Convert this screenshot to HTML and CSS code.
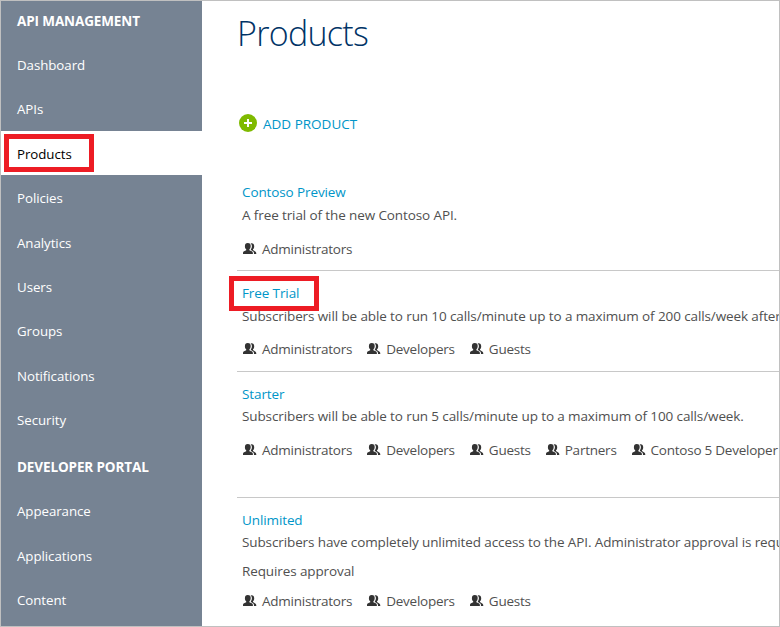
FILE: index.html
```
<!DOCTYPE html>
<html lang="en">
<head>
<meta charset="utf-8">
<title>Products</title>
<link rel="stylesheet" href="styles.css">
</head>
<body>
<svg class="defs" width="0" height="0" aria-hidden="true">
  <symbol id="people" viewBox="0 0 14 12">
    <path d="M4.7 0C6.8 0 7.8 1.2 7.7 3.2C7.6 4.8 7.1 5.7 6.4 6.3V7.2L9.2 8.6C9.8 9 9.9 9.8 9.9 11H0C0 9.8 0 9 .6 8.6L3.2 7.2V6.3C2.4 5.7 1.9 4.7 1.9 3.2C1.9 1.2 2.9 0 4.7 0Z"/>
    <path d="M7.5.3C9.9-.3 11.3 1 11.2 3.4C11.2 4.8 10.6 5.8 10 6.3V7.1L12.6 8.7C13.2 9.2 13.3 9.8 13.3 11H11C11 9.4 10.8 8.7 10 8.2L7.9 7V6.2C8.6 5.5 8.9 4.5 8.9 3.1C8.9 1.9 8.3 1 7.5.3Z"/>
  </symbol>
</svg>
<div class="app">
  <nav class="sidebar">
    <h2>API MANAGEMENT</h2>
    <a>Dashboard</a>
    <a>APIs</a>
    <a class="active">Products</a>
    <a>Policies</a>
    <a>Analytics</a>
    <a>Users</a>
    <a>Groups</a>
    <a>Notifications</a>
    <a>Security</a>
    <h2 class="portal">DEVELOPER PORTAL</h2>
    <a>Appearance</a>
    <a>Applications</a>
    <a>Content</a>
  </nav>
  <main class="content">
    <h1>Products</h1>
    <a class="add"><svg width="18" height="18" viewBox="0 0 18 18"><circle cx="9" cy="9" r="9" fill="#7fba00"/><path d="M5 9H13M9 5V13" stroke="#fff" stroke-width="2"/></svg><span>ADD PRODUCT</span></a>
    <section class="product">
      <a class="name">Contoso Preview</a>
      <p>A free trial of the new Contoso API.</p>
      <div class="groups"><span><svg><use href="#people"/></svg>Administrators</span></div>
    </section>
    <section class="product">
      <a class="name">Free Trial</a>
      <p>Subscribers will be able to run 10 calls/minute up to a maximum of 200 calls/week after</p>
      <div class="groups"><span><svg><use href="#people"/></svg>Administrators</span><span><svg><use href="#people"/></svg>Developers</span><span><svg><use href="#people"/></svg>Guests</span></div>
    </section>
    <section class="product starter">
      <a class="name">Starter</a>
      <p>Subscribers will be able to run 5 calls/minute up to a maximum of 100 calls/week.</p>
      <div class="groups"><span><svg><use href="#people"/></svg>Administrators</span><span><svg><use href="#people"/></svg>Developers</span><span><svg><use href="#people"/></svg>Guests</span><span><svg><use href="#people"/></svg>Partners</span><span><svg><use href="#people"/></svg>Contoso 5 Developer</span></div>
    </section>
    <section class="product unlimited">
      <a class="name">Unlimited</a>
      <p>Subscribers have completely unlimited access to the API. Administrator approval is requ</p>
      <p class="approval">Requires approval</p>
      <div class="groups"><span><svg><use href="#people"/></svg>Administrators</span><span><svg><use href="#people"/></svg>Developers</span><span><svg><use href="#people"/></svg>Guests</span></div>
    </section>
  </main>
  <div class="mark mark-nav"></div>
  <div class="mark mark-product"></div>
</div>
</body>
</html>
```
FILE: styles.css
```
* { box-sizing: border-box; }
body { margin: 0; font-family: "Open Sans", "Noto Sans", sans-serif; font-size: 13.5px; color: #505050; }
.defs { display: block; }
.app { position: relative; display: flex; width: 780px; height: 627px; border: 1px solid #c0c0c0; background: #fff; overflow: hidden; }
.sidebar { flex: 0 0 201px; background: #768393; color: #fff; }
.sidebar h2 { margin: 0; padding-left: 16px; height: 41.6px; line-height: 40px; font-size: 13.5px; font-weight: 700; letter-spacing: -.12px; }
.sidebar .portal { height: 46.6px; line-height: 50px; }
.sidebar a { display: block; height: 44.4px; padding: .5px 0 0 16px; line-height: 45.4px; font-size: 13.3px; letter-spacing: -.06px; }
.sidebar .active { height: 44px; margin-bottom: .4px; background: #fff; color: #000; }
.content { flex: 1; min-width: 0; padding-left: 35px; overflow: hidden; white-space: nowrap; }
h1 { margin: 0; height: 104px; line-height: 64px; font-size: 34px; font-weight: 300; letter-spacing: -.7px; color: #003366; }
.add { display: flex; align-items: center; gap: 6.5px; height: 38px; margin-bottom: -2px; padding-left: 1.5px; color: #0095c8; }
.add svg { margin-top: -2px; }
.product { height: 101px; padding: 11px 0 0 5px; border-bottom: 1px solid #c8c8c8; letter-spacing: -.11px; }
.add + .product { margin-top: 29px; }
.product .name { display: block; line-height: 22px; color: #0095c8; }
.product p { margin: 0; line-height: 24px; }
.groups { display: flex; gap: 14px; margin-top: 10px; line-height: 23px; letter-spacing: -.24px; }
.groups span { display: flex; align-items: center; }
.groups svg { flex: none; width: 14px; height: 12px; margin: -1px 5px 0 1px; fill: #333; }
.add + .product .groups { margin-top: 11px; }
.starter { height: 126px; }
.starter p, .unlimited p { line-height: 23px; }
.starter .groups { margin-top: 11px; }
.unlimited { height: 128px; border: 0; }
.product .approval { margin-top: 6px; }
.unlimited .groups { margin-top: 7px; }
.mark { position: absolute; border: 5px solid #ed1c24; }
.mark-nav { left: 3px; top: 133px; width: 90px; height: 38px; }
.mark-product { left: 228px; top: 275px; width: 90px; height: 35px; }
```
